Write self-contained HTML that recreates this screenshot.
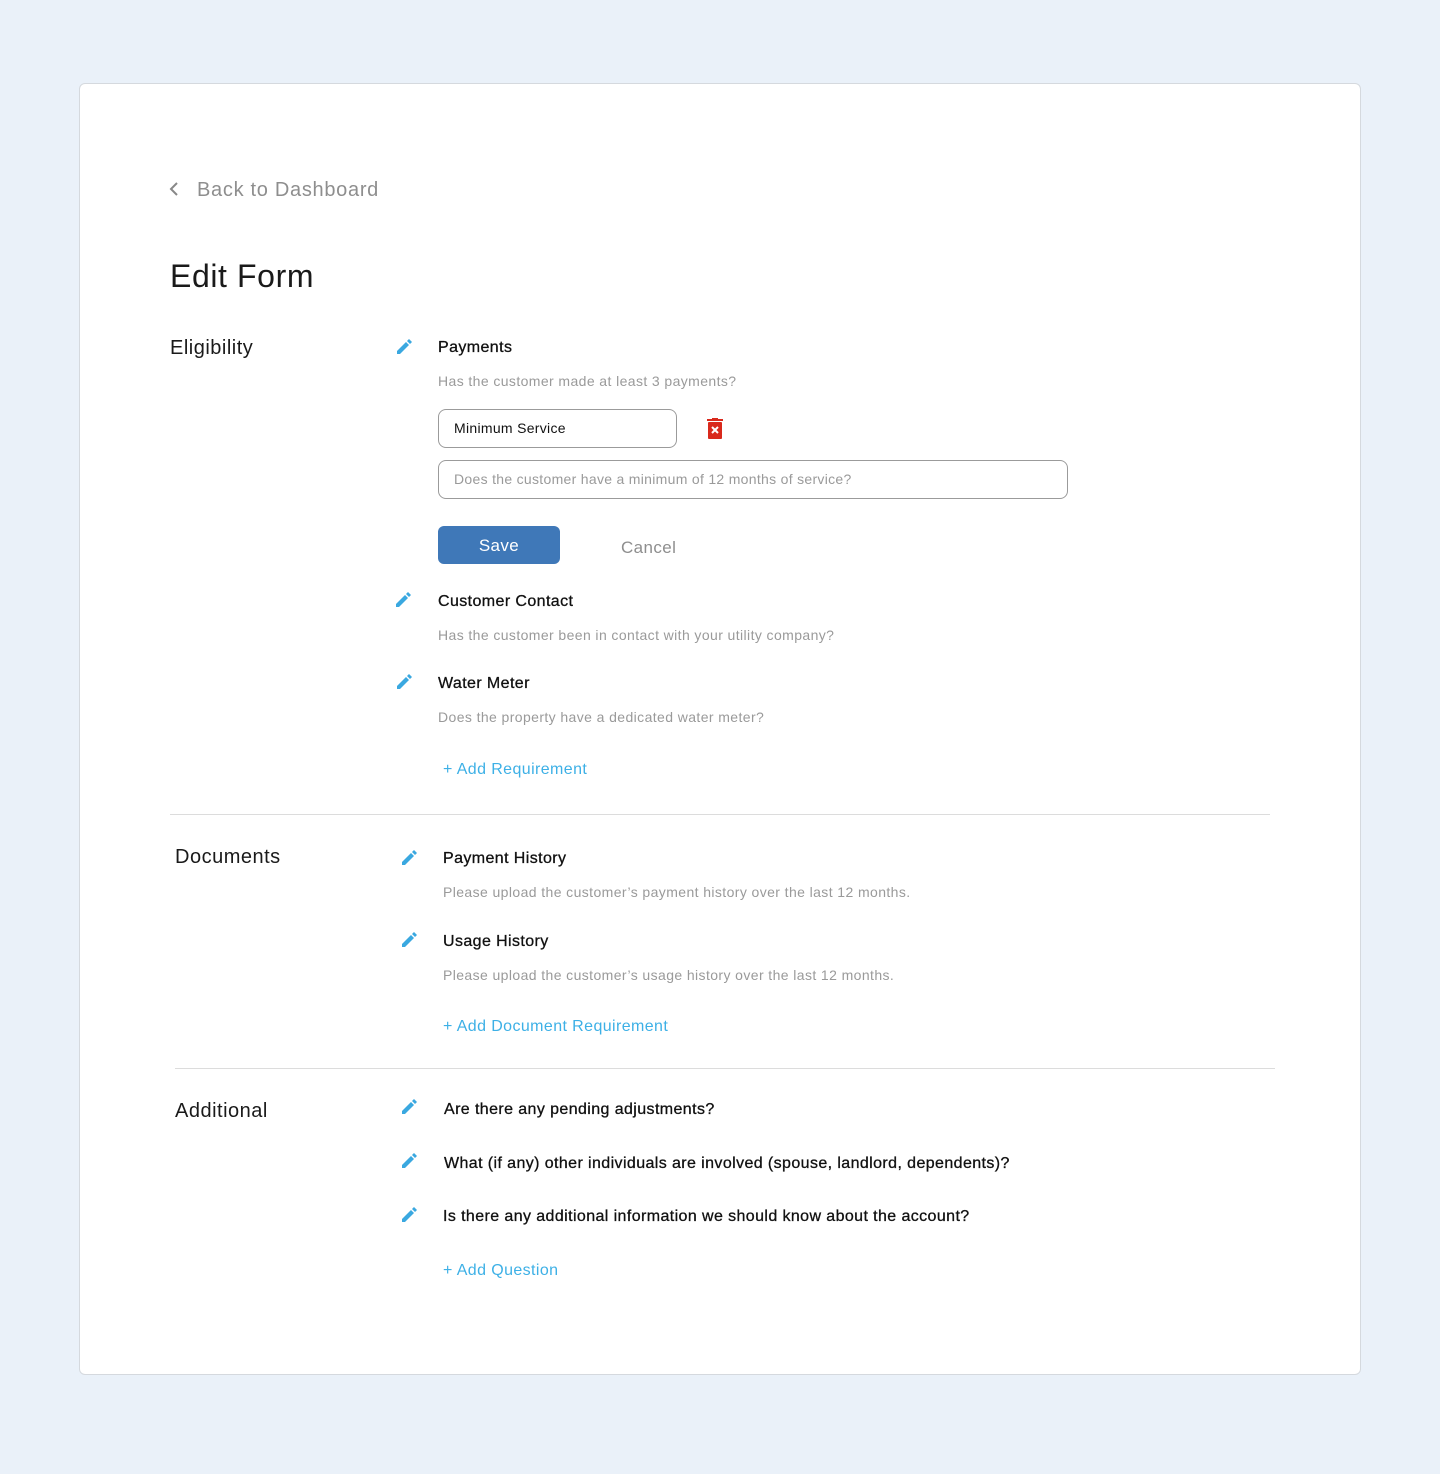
<!DOCTYPE html>
<html><head><style>
body{margin:0;background:#eaf1f9;font-family:"Liberation Sans",Arial,sans-serif;}
.card{position:absolute;left:79px;top:83px;width:1280px;height:1290px;background:#fff;border:1px solid #d5d9de;border-radius:6px;}
.t{position:absolute;white-space:nowrap;line-height:20px;letter-spacing:0.4px;}
.h{font-size:20px;color:#1a1a1a;letter-spacing:0.5px;}
.ti{font-size:16px;color:#111;-webkit-text-stroke:0.3px #111;}
.d{font-size:14px;color:#9a9a9a;}
.l{font-size:16px;color:#3db0e6;}
.pen{position:absolute;width:18px;height:18px;}
.hr{position:absolute;height:1px;background:#dcdcdc;}
.inp{position:absolute;border:1px solid #9b9b9b;border-radius:8px;height:39px;box-sizing:border-box;font-size:14px;line-height:37px;padding-left:15px;letter-spacing:0.3px;}
</style></head><body>
<div class="card"></div>
<svg style="position:absolute;left:168px;top:181px" width="12" height="16"><path d="M9 2 L3 8 L9 14" stroke="#888" stroke-width="2" fill="none"/></svg>
<div class="t" style="left:197px;top:180px;font-size:20px;color:#8e8e8e;letter-spacing:0.7px">Back to Dashboard</div>
<div class="t" style="left:170px;top:258px;font-size:32px;line-height:36px;color:#1a1a1a;letter-spacing:0.6px">Edit Form</div>

<div class="t h" style="left:170px;top:338px">Eligibility</div>
<div class="t ti" style="left:438px;top:338px">Payments</div>
<div class="t d" style="left:438px;top:371px">Has the customer made at least 3 payments?</div>
<div class="inp" style="left:438px;top:409px;width:239px;color:#111">Minimum Service</div>
<svg style="position:absolute;left:707px;top:418px" width="16" height="22"><rect x="0" y="1" width="16" height="2" fill="#d9291c"/><rect x="5" y="0" width="6" height="2" fill="#d9291c"/><rect x="1" y="4" width="14" height="17" rx="1" fill="#d9291c"/><path d="M5 9 L11 15 M11 9 L5 15" stroke="#fff" stroke-width="2"/></svg>
<div class="inp" style="left:438px;top:460px;width:630px;color:#9a9a9a">Does the customer have a minimum of 12 months of service?</div>
<div style="position:absolute;left:438px;top:526px;width:122px;height:38px;background:#3f78b8;border-radius:6px;color:#fff;font-size:17px;line-height:40px;text-align:center;letter-spacing:0.4px">Save</div>
<div class="t" style="left:621px;top:538px;font-size:17px;color:#8e8e8e">Cancel</div>
<div class="t ti" style="left:438px;top:592px">Customer Contact</div>
<div class="t d" style="left:438px;top:625px">Has the customer been in contact with your utility company?</div>
<div class="t ti" style="left:438px;top:674px">Water Meter</div>
<div class="t d" style="left:438px;top:707px">Does the property have a dedicated water meter?</div>
<div class="t l" style="left:443px;top:760px">+ Add Requirement</div>
<div class="hr" style="left:170px;top:814px;width:1100px"></div>

<div class="t h" style="left:175px;top:847px">Documents</div>
<div class="t ti" style="left:443px;top:849px">Payment History</div>
<div class="t d" style="left:443px;top:882px">Please upload the customer’s payment history over the last 12 months.</div>
<div class="t ti" style="left:443px;top:932px">Usage History</div>
<div class="t d" style="left:443px;top:965px">Please upload the customer’s usage history over the last 12 months.</div>
<div class="t l" style="left:443px;top:1017px">+ Add Document Requirement</div>
<div class="hr" style="left:175px;top:1068px;width:1100px"></div>

<div class="t h" style="left:175px;top:1101px">Additional</div>
<div class="t ti" style="left:444px;top:1100px">Are there any pending adjustments?</div>
<div class="t ti" style="left:444px;top:1154px">What (if any) other individuals are involved (spouse, landlord, dependents)?</div>
<div class="t ti" style="left:443px;top:1207px">Is there any additional information we should know about the account?</div>
<div class="t l" style="left:443px;top:1261px">+ Add Question</div>

<svg width="0" height="0" style="position:absolute"><defs><g id="p"><path d="M2 13 L2 16 L5 16 L14 7 L11 4 Z" fill="#3aa8e0"/><path d="M12 3 L14 1 L17 4 L15 6 Z" fill="#3aa8e0"/></g></defs></svg>
<svg class="pen" style="left:395px;top:338px"><use href="#p"/></svg>
<svg class="pen" style="left:394px;top:591px"><use href="#p"/></svg>
<svg class="pen" style="left:395px;top:673px"><use href="#p"/></svg>
<svg class="pen" style="left:400px;top:849px"><use href="#p"/></svg>
<svg class="pen" style="left:400px;top:931px"><use href="#p"/></svg>
<svg class="pen" style="left:400px;top:1098px"><use href="#p"/></svg>
<svg class="pen" style="left:400px;top:1152px"><use href="#p"/></svg>
<svg class="pen" style="left:400px;top:1206px"><use href="#p"/></svg>
</body></html>
